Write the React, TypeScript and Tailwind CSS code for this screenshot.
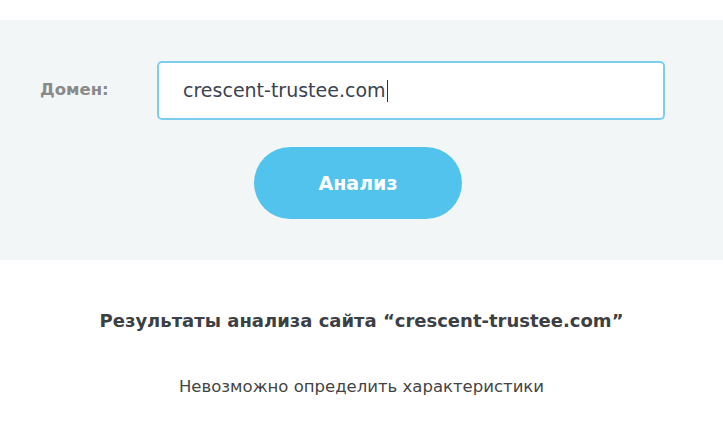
import React from "react";

export default function App() {
  return (
    <div className="w-[723px] h-[430px] bg-white overflow-hidden" style={{ fontFamily: "'DejaVu Sans', sans-serif" }}>
      <div className="h-[20px]" />
      <div className="bg-[#f3f6f7] h-[240px] pt-[41px]">
        <div className="flex items-center">
          <div className="w-[157px] pl-[40px] text-[16.5px] font-bold text-[#8a8a8a]">Домен:</div>
          <div className="w-[508px] h-[59px] border-2 border-[#7dcdee] rounded-[5px] bg-white flex items-center pl-[24px]">
            <span className="text-[19px] text-[#3b4250]">crescent-trustee.com</span>
            <span className="inline-block w-[1.5px] h-[22px] bg-[#333] ml-[1px]" />
          </div>
        </div>
        <div className="flex pl-[254px] mt-[27px]">
          <button className="w-[208px] h-[72px] rounded-full bg-[#52c3ec] text-white text-[19px] font-bold">Анализ</button>
        </div>
      </div>
      <div className="flex flex-col items-center">
        <div className="mt-[47px] text-[18px] font-bold text-[#3c3f44]">Результаты анализа сайта “crescent-trustee.com”</div>
        <div className="mt-[41px] text-[16.5px] text-[#444]">Невозможно определить характеристики</div>
      </div>
    </div>
  );
}
